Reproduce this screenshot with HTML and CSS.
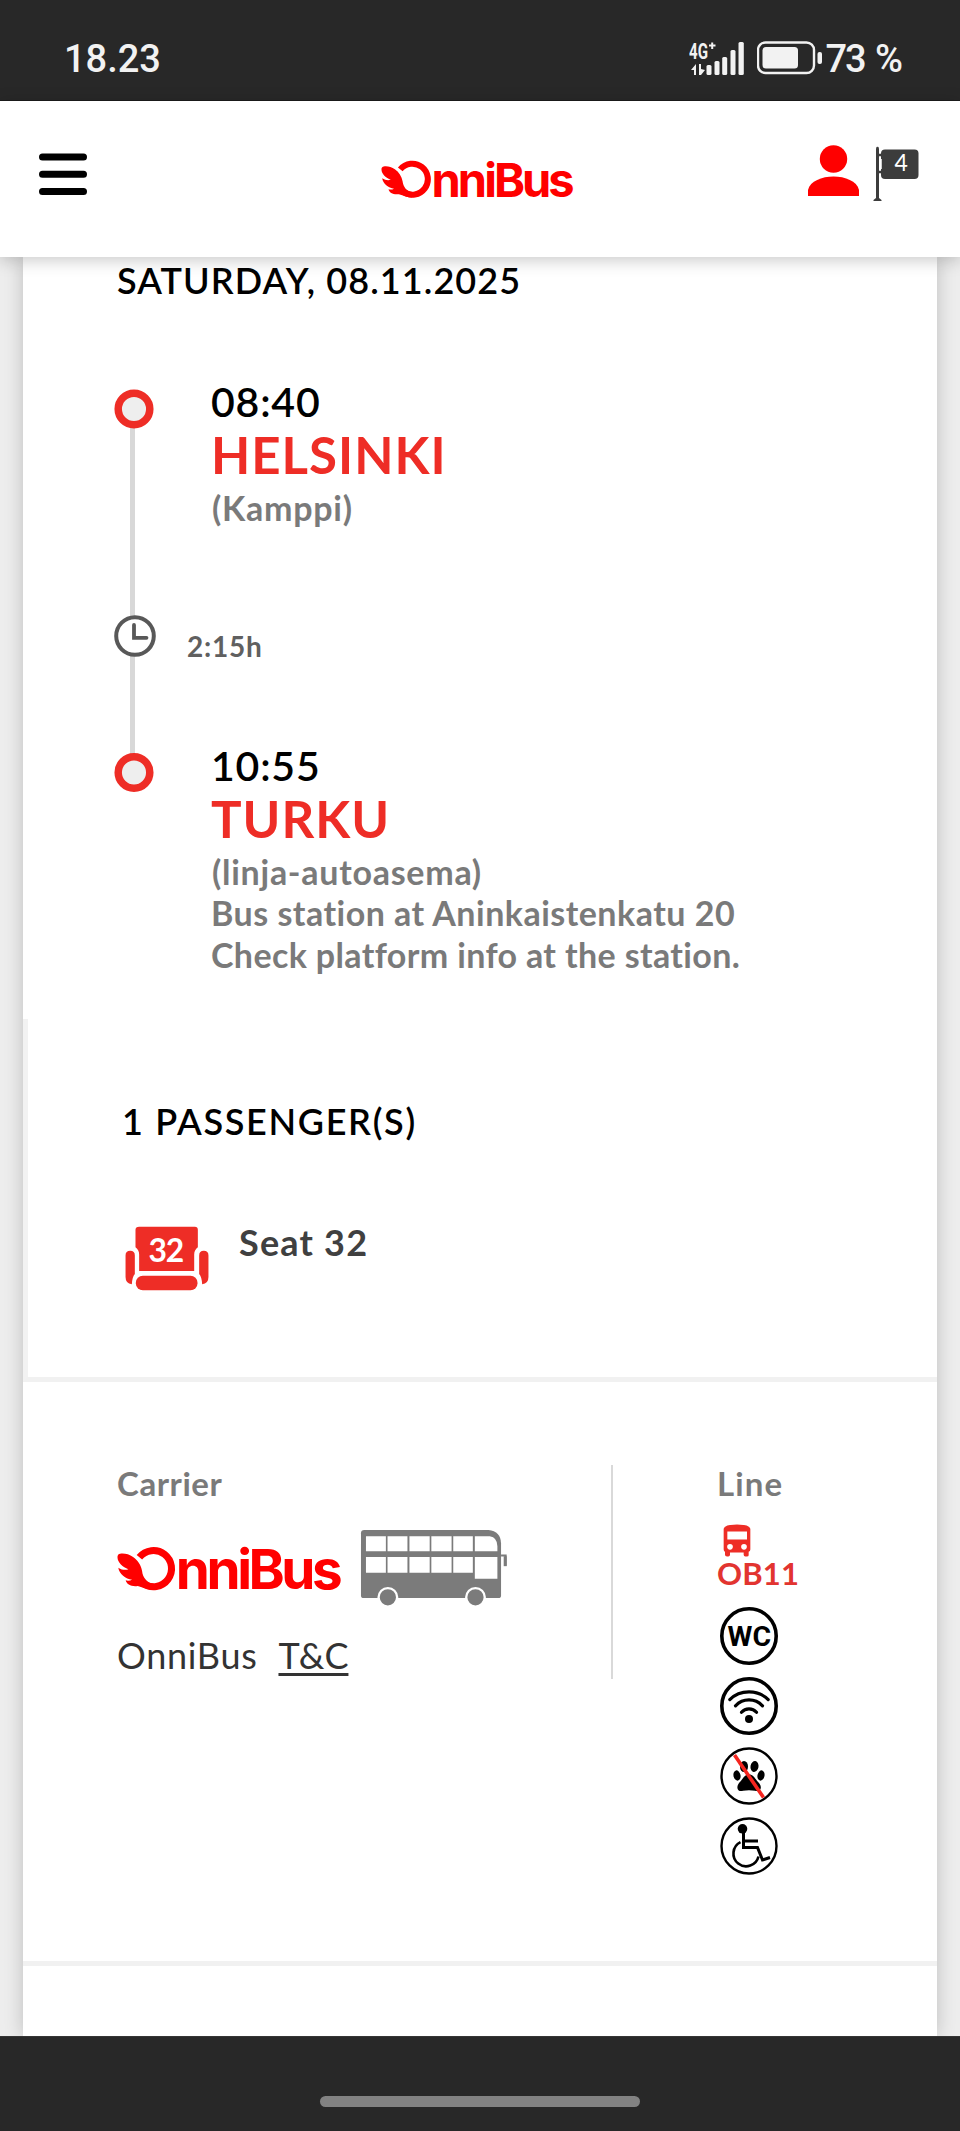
FILE: index.html
```html
<!DOCTYPE html>
<html lang="en">
<head>
<meta charset="utf-8">
<title>OnniBus</title>
<link rel="stylesheet" href="styles.css">
</head>
<body>
<div class="statusbar">
  <span class="clock">18.23</span>
  <div class="status-right">
    <svg class="signal" width="55" height="34" viewBox="690 42 55 34" fill="#f2f2f2">
      <text class="net" x="690" y="58.500" textLength="19" lengthAdjust="spacingAndGlyphs">4G</text>
      <path d="M710 45.500h6.500M713.200 42.500v6.500" stroke="#f2f2f2" stroke-width="2"/>
      <path d="M692 70l5-6v11h-2v-5zM700 64h2v5l4 1-4 5h-2z"/>
      <rect x="707.500" y="65" width="5" height="10" rx="1.500"/><rect x="715.500" y="61" width="5" height="14" rx="1.500"/><rect x="723.200" y="57" width="5" height="18" rx="1.500"/><rect x="731.500" y="50" width="5" height="25" rx="1.500"/><rect x="739.500" y="42" width="5.300" height="33" rx="1.500"/>
    </svg>
    <svg class="battery" width="66" height="34" viewBox="758 41.500 66 34">
      <rect x="759" y="43" width="56" height="30.500" rx="7.500" fill="none" stroke="#f2f2f2" stroke-width="2.400"/>
      <rect x="763.500" y="47.500" width="35.500" height="21.500" rx="3.500" fill="#f2f2f2"/>
      <rect x="818.500" y="52.500" width="4.500" height="12" rx="2" fill="#f2f2f2"/>
    </svg>
    <span class="percent">73 %</span>
  </div>
</div>
<header class="header">
  <svg class="menu" width="48" height="43" viewBox="0 0 48 43"><path d="M3.500 4h41M3.500 21.200h41M3.500 38.500h41" stroke="#000" stroke-width="7" stroke-linecap="round"/></svg>
  <svg class="logo" width="194" height="39" viewBox="50 318 676 136">
    <path d="M117 351A54 54 0 1 1 128 429" fill="none" stroke="#f00" stroke-width="21"/>
    <path d="M54 343C62 337 84 340 98 350C112 360 122 374 125 392C127 412 140 428 160 430L158 449C142 449 128 441 112 437C94 440 78 432 76 420C82 422 90 421 95 418C76 416 56 400 54 382C64 389 76 390 84 387C66 380 48 364 52 346Z" fill="#f00"/>
    <text class="logo-text" x="226" y="446" textLength="499">nniBus</text>
  </svg>
  <div class="account">
    <svg width="51" height="51" viewBox="0 0 51 51" fill="#f00"><circle cx="25.500" cy="14" r="13.700"/><path d="M0 51v-6C2 36 14 31.500 25.500 31.500S49 36 51 45v6z"/></svg>
    <svg class="flag" width="46" height="56" viewBox="0 0 46 56"><path d="M4.500 2v51M4.500 9h5M4.500 26h5" stroke="#3c3c3c" stroke-width="2.600" stroke-linecap="round"/><path d="M3 2.500h3V52l2.500 2v1h-8v-1L3 52z" fill="#3c3c3c"/><rect x="8" y="3.500" width="37.500" height="29.500" rx="4" fill="#3c3c3c"/><path d="M8 13v10" stroke="#fff" stroke-width="1.500"/><text class="flag-count" x="21.500" y="25">4</text></svg>
  </div>
</header>
<main class="page">
  <div class="card">
    <section class="trip">
      <h2 class="heading date">SATURDAY, 08.11.2025</h2>
      <div class="timeline">
        <svg class="rail" width="42" height="405" viewBox="114 388 42 405">
          <path d="M132.500 409v363" stroke="#d8d8d8" stroke-width="5"/>
          <g fill="#eee" stroke="#ee2d26" stroke-width="7.500"><circle cx="134" cy="409" r="15.800"/><circle cx="134" cy="772.500" r="15.800"/></g>
          <circle cx="135" cy="636" r="18.800" fill="#fff" stroke="#585858" stroke-width="4"/>
          <path d="M134 625v12.800h12.500" fill="none" stroke="#585858" stroke-width="3.800" stroke-linecap="round"/>
        </svg>
        <div class="stops">
          <div class="stop">
            <div class="time">08:40</div>
            <div class="city">HELSINKI</div>
            <div class="place tight">(Kamppi)</div>
          </div>
          <div class="duration">2:15h</div>
          <div class="stop">
            <div class="time">10:55</div>
            <div class="city">TURKU</div>
            <div class="place tight">(linja-autoasema)</div>
            <div class="place">Bus station at Aninkaistenkatu 20</div>
            <div class="place check">Check platform info at the station.</div>
          </div>
        </div>
      </div>
    </section>
    <section class="passengers">
      <h2 class="heading count">1 PASSENGER(S)</h2>
      <div class="seat-row">
        <svg class="seat" width="84" height="65" viewBox="376 678 252 196" fill="#ee2d26">
          <path d="M418 680h168q9 0 9 9v53q-11 8-11 22v50H418v-50q0-14-11-22v-53q0-9 11-9z"/>
          <path d="M377 767q0-14 14-14t14 14v56q-8 9-9 31-19-2-19-22zM627 767q0-14-14-14t-14 14v56q8 9 9 31 19-2 19-22z"/>
          <rect x="408" y="828" width="186" height="44" rx="21"/>
          <text class="seat-no" x="446" y="787" textLength="108">32</text>
        </svg>
        <span class="seat-label">Seat 32</span>
      </div>
    </section>
    <section class="details">
      <div class="carrier">
        <div class="label">Carrier</div>
        <div class="brand">
          <svg class="brand-logo" width="226" height="46" viewBox="50 318 676 136">
            <path d="M117 351A54 54 0 1 1 128 429" fill="none" stroke="#f00" stroke-width="21"/>
            <path d="M54 343C62 337 84 340 98 350C112 360 122 374 125 392C127 412 140 428 160 430L158 449C142 449 128 441 112 437C94 440 78 432 76 420C82 422 90 421 95 418C76 416 56 400 54 382C64 389 76 390 84 387C66 380 48 364 52 346Z" fill="#f00"/>
            <text class="logo-text" x="226" y="446" textLength="499">nniBus</text>
          </svg>
          <svg width="148" height="77" viewBox="780 268 444 232">
            <path d="M792 271h374q37 4 38 40v157q0 8-8 8H790q-8 0-8-8V281q0-10 10-10z" fill="#7b7b7b"/>
            <path d="M797 290h60v45h-60zM862 290h60v45h-60zM928 290h61v45h-61zM994 290h61v45h-61zM1060 290h59v45h-59zM1125 290h45q23 4 23 30v15h-68zM797 352h60v48h-60zM862 352h60v48h-60zM928 352h61v48h-61zM994 352h61v48h-61zM1060 352h59v48h-59zM1125 352h68v66h-68z" fill="#fff"/>
            <path d="M1204 348h14v31" fill="none" stroke="#7b7b7b" stroke-width="6"/><path d="M1212 350h9v30h-9z" fill="#7b7b7b"/>
            <g fill="#7b7b7b" stroke="#fff" stroke-width="7"><circle cx="863" cy="474" r="28"/><circle cx="1127" cy="474" r="28"/></g>
          </svg>
        </div>
        <div class="terms"><span class="name">OnniBus</span><a class="tc">T&amp;C</a></div>
      </div>
      <div class="divider"></div>
      <div class="line">
        <div class="label line-label">Line</div>
        <svg class="coach" width="28" height="33" viewBox="400 254 84 98"><path d="M402 268q2-13 40-13t40 13v62q0 6-5 7v10q0 4-6 4h-4q-5 0-5-5v-7h-41v7q0 5-5 5h-4q-6 0-6-5v-9q-4-2-4-8z" fill="#ee2d26"/><path d="M413 276h59v24h-59z" fill="#fff"/><circle cx="421" cy="322" r="8.500" fill="#fff"/><circle cx="463" cy="322" r="8.500" fill="#fff"/></svg>
        <div class="route">OB11</div>
        <div class="amenities">
          <svg width="60" height="60" viewBox="0 0 60 60"><circle cx="30" cy="30" r="27.200" fill="none" stroke="#000" stroke-width="3.600"/><text class="wc" x="8.500" y="40" textLength="43.500" lengthAdjust="spacingAndGlyphs">WC</text></svg>
          <svg width="60" height="60" viewBox="0 0 60 60" fill="none" stroke="#000" stroke-width="3.200" stroke-linecap="round"><circle cx="30" cy="30" r="27.200" stroke-width="3.600"/><path d="M10.800 23.600C21 13.300 39 13.300 49.200 23.600M16.500 29.800C24 22 36 22 43.500 29.800M22.500 36.300C26.500 31.800 33.500 31.800 37.500 36.300"/><circle cx="30" cy="43" r="4" fill="#000" stroke="none"/></svg>
          <svg width="60" height="60" viewBox="0 0 60 60"><circle cx="30" cy="30" r="27.500" fill="none" stroke="#000" stroke-width="2.400"/><g><ellipse cx="18" cy="29.500" rx="3.500" ry="5.200" transform="rotate(-12 18 29.500)"/><ellipse cx="25" cy="20.500" rx="4" ry="5.500"/><ellipse cx="35.500" cy="20.500" rx="4" ry="5.500" transform="rotate(10 35.500 20.500)"/><ellipse cx="42" cy="29.500" rx="3.500" ry="5.200" transform="rotate(12 42 29.500)"/><path d="M30 28.500C35 28.500 36 33 40 37C44 42 41 46 36 44.800C32 44 28 44 24 44.800C19 46 16.500 42 20 37C24 33 25 28.500 30 28.500Z"/></g><path d="M15.500 9L44.500 51.500" stroke="#f5251f" stroke-width="3.600"/></svg>
          <svg width="60" height="60" viewBox="0 0 60 60" fill="none" stroke="#000" stroke-width="3"><circle cx="30" cy="30" r="27.500" stroke-width="2.400"/><circle cx="23.500" cy="12.800" r="4.800" fill="#000" stroke="none"/><path d="M24.500 16V31.500H38.500L43.500 44L51 41.500M25 25H39"/><path d="M21.500 26.200A12.700 12.700 0 1 0 39.500 40.500" stroke-width="2.600"/></svg>
        </div>
      </div>
    </section>
  </div>
</main>
<footer class="navbar"><div class="pill"></div></footer>
</body>
</html>
```
FILE: styles.css
```css
* { box-sizing: border-box; }
body {
  margin: 0;
  width: 960px;
  height: 2131px;
  display: flex;
  flex-direction: column;
  overflow: hidden;
  background: #ededed;
  font-family: "Lato", "Open Sans", sans-serif;
  font-weight: 700;
  white-space: nowrap;
}
svg { display: block; flex: none; }

.statusbar {
  flex: none;
  height: 101px;
  background: #282828;
  border-bottom: 1px solid #1c1c1c;
  display: flex;
  justify-content: space-between;
  padding: 37px 59px 0 64px;
  color: #f2f2f2;
  font: 500 38px/45px "Roboto", sans-serif;
}
.status-right { display: flex; }
.signal { margin: 5px 13px 0 0; }
.battery { margin: 4px 2px 0 0; }
.percent { letter-spacing: -2px; word-spacing: 3px; }
.net { font: 700 22px "Roboto", sans-serif; }

.header {
  flex: none;
  position: relative;
  z-index: 1;
  height: 156px;
  background: #fff;
  box-shadow: 0 3px 16px rgba(0, 0, 0, .22);
  display: grid;
  grid-template-columns: 342px 1fr auto;
  padding: 0 41px 0 39px;
}
.menu { margin-top: 52px; }
.logo { margin-top: 59px; }
.logo-text { font: 700 164px "Inter", sans-serif; fill: #f00; }
.account { display: flex; gap: 14px; padding-top: 44px; }
.flag { margin-top: 1px; }
.flag-count { font: 400 23px "Lato", sans-serif; fill: #fff; }

.page { flex: 1; min-height: 0; padding: 0 23px; }
.card {
  height: 100%;
  background: #fff;
  box-shadow: 0 0 18px rgba(0, 0, 0, .2);
}

.heading { margin: 0; font-size: 36px; line-height: 44px; font-weight: 600; color: #000; }
.trip { height: 762px; padding: 1px 0 0 91px; }
.date { padding-left: 3px; letter-spacing: 1.1px; }
.timeline { display: flex; gap: 31px; padding-top: 76px; }
.rail { margin-top: 10px; }
.stop { padding-left: 24px; }
.time { font-size: 41px; line-height: 47px; font-weight: 600; letter-spacing: .8px; color: #000; }
.city { font-size: 51px; line-height: 60px; letter-spacing: 1px; color: #ee2d26; }
.place { font-size: 34px; line-height: 41.600px; letter-spacing: .48px; color: #7a7a7a; }
.tight { padding: 2px 0 0 1px; letter-spacing: .73px; }
.check { letter-spacing: .36px; }
.duration { margin: 100px 0 79px; font-size: 28px; line-height: 34px; letter-spacing: .77px; color: #606060; }

.passengers {
  height: 363px;
  border-left: 5px solid #f2f2f2;
  border-bottom: 5px solid #f1f1f1;
  padding: 80px 0 0 94px;
}
.count { letter-spacing: 1.680px; }
.seat-row { display: flex; gap: 30px; padding: 77px 0 0 3px; }
.seat { margin-top: 6px; }
.seat-no { font: 700 96px "Lato", sans-serif; fill: #fff; }
.seat-label { font-size: 36px; line-height: 44px; letter-spacing: 1.2px; color: #404040; }

.details {
  height: 584px;
  border-bottom: 5px solid #f1f1f1;
  padding: 80px 0 0 94px;
  display: grid;
  grid-template-columns: 494px 2px 1fr;
}
.label { font-size: 33px; line-height: 42px; letter-spacing: .55px; color: #7a7a7a; }
.line-label { letter-spacing: 1.12px; }
.brand { display: flex; gap: 17px; padding-top: 25px; }
.brand-logo { margin-top: 17px; }
.terms { display: flex; gap: 21px; margin-top: 27px; font-size: 36px; line-height: 44px; font-weight: 400; color: #333; }
.name { letter-spacing: .7px; }
.tc { text-decoration: underline; text-decoration-thickness: 3px; text-underline-offset: 4px; text-decoration-skip-ink: none; }
.divider { height: 214px; margin-top: 3px; background: #d9d9d9; }
.line { padding-left: 104px; }
.coach { margin: 20px 0 0 6px; }
.route { padding-top: 1px; font-size: 31px; line-height: 30px; letter-spacing: .2px; color: #e23430; }
.amenities { display: flex; flex-direction: column; gap: 10px; margin: 18px 0 0 2px; }
.wc { font: 700 28px "Roboto", sans-serif; }

.navbar {
  flex: none;
  height: 95px;
  background: #282828;
  border-top: 1px solid #353535;
  padding-top: 59px;
  position: relative;
  z-index: 1;
}
.pill { width: 320px; height: 11px; margin: 0 auto; border-radius: 6px; background: #828282; }
```
